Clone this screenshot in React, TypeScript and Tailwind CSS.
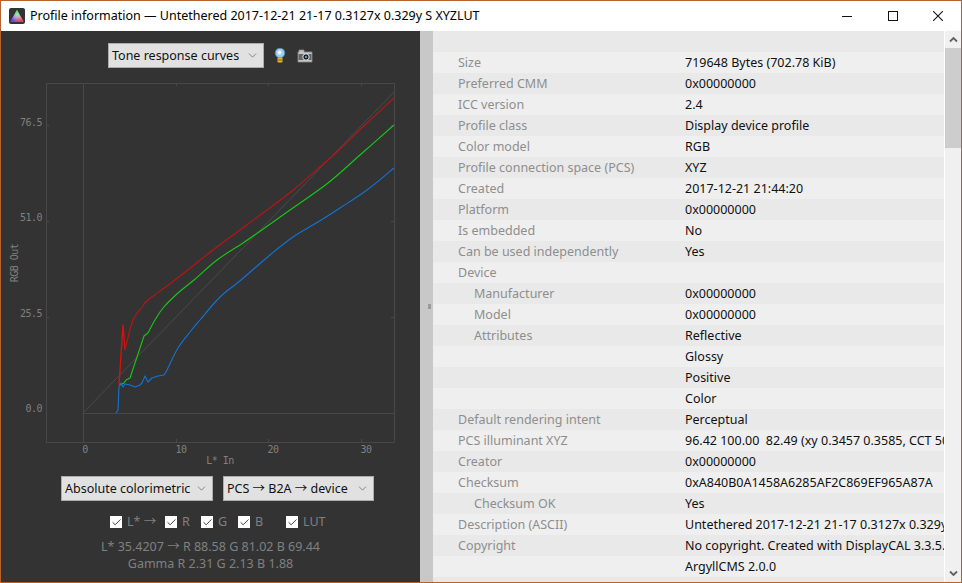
import React from 'react';
import { Check, ChevronDown } from 'lucide-react';

const rows: Array<{ label?: string; value?: string; indent?: boolean }> = [
  {},
  { label: 'Size', value: '719648 Bytes (702.78 KiB)' },
  { label: 'Preferred CMM', value: '0x00000000' },
  { label: 'ICC version', value: '2.4' },
  { label: 'Profile class', value: 'Display device profile' },
  { label: 'Color model', value: 'RGB' },
  { label: 'Profile connection space (PCS)', value: 'XYZ' },
  { label: 'Created', value: '2017-12-21 21:44:20' },
  { label: 'Platform', value: '0x00000000' },
  { label: 'Is embedded', value: 'No' },
  { label: 'Can be used independently', value: 'Yes' },
  { label: 'Device' },
  { label: 'Manufacturer', value: '0x00000000', indent: true },
  { label: 'Model', value: '0x00000000', indent: true },
  { label: 'Attributes', value: 'Reflective', indent: true },
  { value: 'Glossy' },
  { value: 'Positive' },
  { value: 'Color' },
  { label: 'Default rendering intent', value: 'Perceptual' },
  { label: 'PCS illuminant XYZ', value: '96.42 100.00  82.49 (xy 0.3457 0.3585, CCT 5000K)' },
  { label: 'Creator', value: '0x00000000' },
  { label: 'Checksum', value: '0xA840B0A1458A6285AF2C869EF965A87A' },
  { label: 'Checksum OK', value: 'Yes', indent: true },
  { label: 'Description (ASCII)', value: 'Untethered 2017-12-21 21-17 0.3127x 0.329y S XYZLUT' },
  { label: 'Copyright', value: 'No copyright. Created with DisplayCAL 3.3.5.' },
  { value: 'ArgyllCMS 2.0.0' },
  {},
];

const toggles = [
  { label: 'L* →', width: 'w-[55px]' },
  { label: 'R', width: 'w-[36px]' },
  { label: 'G', width: 'w-[37px]' },
  { label: 'B', width: 'w-[48px]' },
  { label: 'LUT', width: 'w-[50px]' },
];

type Pt = [number, number];

// catmull-rom through the measured points, the jagged shadow end stays straight
function smooth(p: Pt[]) {
  let d = `M${p[0][0]} ${p[0][1]}`;
  for (let i = 0; i < p.length - 1; i++) {
    const a = p[Math.max(i - 1, 0)];
    const b = p[i];
    const c = p[i + 1];
    const e = p[Math.min(i + 2, p.length - 1)];
    const c1x = b[0] + (c[0] - a[0]) / 6;
    const c1y = b[1] + (c[1] - a[1]) / 6;
    const c2x = c[0] - (e[0] - b[0]) / 6;
    const c2y = c[1] - (e[1] - b[1]) / 6;
    d += `C${c1x} ${c1y} ${c2x} ${c2y} ${c[0]} ${c[1]}`;
  }
  return d;
}

const redLow = '119,385 123,325 125,350';
const red: Pt[] = [[125, 350], [133, 320], [143, 306], [148, 300], [175, 280], [213, 250], [240, 230], [267, 210], [292, 191], [320, 167], [340, 149], [367, 123], [394, 98]];
const greenLow = '120,385 124,383 126,380 130,378 137,357 144,336 148,333';
const green: Pt[] = [[148, 333], [155, 320], [163, 308], [178, 293], [194, 280], [217, 260], [243, 243], [266, 227], [290, 210], [328, 183], [360, 155], [394, 125]];
const blueLow = '116,413 118,410 119,387 121,383 123,387 125,384 130,385 135,387 140,385 142,383 145,376 148,382 152,378 158,376 164,375 166,372';
const blue: Pt[] = [[166, 372], [178, 348], [190, 332], [200, 320], [220, 297], [241, 280], [270, 255], [293, 237], [318, 222], [340, 208], [367, 190], [394, 168]];

function Dropdown({ label, width }: { label: string; width: string }) {
  return (
    <div className={`${width} h-[25px] flex items-center justify-between bg-[#e1e1e1] border border-[#adadad] pl-[3px] pr-[4px] text-[12.5px] text-[#111] whitespace-nowrap`}>
      <span className="pt-[2px]">{label}</span>
      <ChevronDown size={13} strokeWidth={1.2} className="text-[#555]" />
    </div>
  );
}

function Chart() {
  return (
    <svg width="419" height="396" viewBox="1 74 419 396" className="block" fontFamily="'DejaVu Sans Mono', monospace" fontSize="10" letterSpacing="-0.5" fill="#808080">
      <g stroke="#484848" fill="none">
        <rect x="46.5" y="83.5" width="348" height="359" />
        <path d="M83.5 83V442M83 413.5H394" />
        <path d="M176.5 83v3M268.5 83v3M361.5 83v3M176.5 442v-3M268.5 442v-3M361.5 442v-3M46 125.5h3M46 221.5h3M46 317.5h3M394 125.5h-3M394 221.5h-3M394 317.5h-3" />
      </g>
      <polyline points="83,413 394,92" fill="none" stroke="#4a4a4a" />
      <g fill="none" strokeWidth="1.1" strokeLinejoin="round">
        <polyline points={redLow} stroke="#d81010" strokeWidth="1.4" />
        <path d={smooth(red)} stroke="#bc1414" />
        <polyline points={greenLow} stroke="#15c915" />
        <path d={smooth(green)} stroke="#15c915" />
        <polyline points={blueLow} stroke="#1074d8" />
        <path d={smooth(blue)} stroke="#1074d8" />
      </g>
      <g textAnchor="end">
        <text x="42" y="126">76.5</text>
        <text x="42" y="221">51.0</text>
        <text x="42" y="317">25.5</text>
        <text x="42" y="412">0.0</text>
      </g>
      <g textAnchor="middle">
        <text x="85" y="453">0</text>
        <text x="181" y="453">10</text>
        <text x="273" y="453">20</text>
        <text x="366" y="453">30</text>
        <text x="220" y="464">L* In</text>
        <text x="0" y="0" transform="translate(18 263) rotate(-90)">RGB Out</text>
      </g>
    </svg>
  );
}

function AppLogo() {
  return (
    <svg width="16" height="16" viewBox="0 0 16 16" className="shrink-0">
      <defs>
        <linearGradient id="logoGreen" x1="0.5" y1="0" x2="0.5" y2="1">
          <stop offset="0" stopColor="#20e040" />
          <stop offset="0.65" stopColor="#20e040" stopOpacity="0" />
        </linearGradient>
        <linearGradient id="logoBlue" x1="0" y1="1" x2="0.6" y2="0.5">
          <stop offset="0" stopColor="#3010f0" />
          <stop offset="1" stopColor="#3010f0" stopOpacity="0" />
        </linearGradient>
        <linearGradient id="logoRed" x1="1" y1="1" x2="0.4" y2="0.5">
          <stop offset="0" stopColor="#f01020" />
          <stop offset="1" stopColor="#f01020" stopOpacity="0" />
        </linearGradient>
      </defs>
      <rect width="16" height="16" rx="2" fill="#333" />
      <path d="M8 2L14.5 13.5H1.5Z" fill="#f4f4f4" />
      <path d="M8 2L14.5 13.5H1.5Z" fill="url(#logoGreen)" />
      <path d="M8 2L14.5 13.5H1.5Z" fill="url(#logoBlue)" />
      <path d="M8 2L14.5 13.5H1.5Z" fill="url(#logoRed)" />
    </svg>
  );
}

function BulbIcon() {
  return (
    <svg width="12" height="15" viewBox="0 0 12 15">
      <circle cx="6" cy="5" r="4.8" fill="#9fcdf2" stroke="#4e83b3" strokeWidth="0.8" />
      <circle cx="5.5" cy="4.5" r="2" fill="#eef8ff" />
      <rect x="3.5" y="9.5" width="5" height="5" rx="1" fill="#e3b92e" />
      <path d="M3.5 12h5" stroke="#7d6210" />
    </svg>
  );
}

function CameraIcon() {
  return (
    <svg width="16" height="15" viewBox="0 0 16 15">
      <path d="M1 4h1V2h5v2h8v10H1Z" fill="#c4c4c4" stroke="#8c8c8c" strokeWidth="0.8" />
      <rect x="1.5" y="6" width="13" height="6" fill="#666" />
      <circle cx="9" cy="9" r="3.2" fill="#1d1d1d" stroke="#e8e8e8" />
      <circle cx="9" cy="9" r="1.2" fill="#5f8fc0" />
    </svg>
  );
}

function WindowControls() {
  return (
    <div className="flex items-center text-[#111]">
      <div className="w-[46px] flex justify-center">
        <svg width="10" height="10" viewBox="0 0 10 10"><path d="M0 5.5H10" stroke="currentColor" /></svg>
      </div>
      <div className="w-[45px] flex justify-center">
        <svg width="10" height="10" viewBox="0 0 10 10"><rect x="0.5" y="0.5" width="9" height="9" fill="none" stroke="currentColor" /></svg>
      </div>
      <div className="w-[46px] flex justify-center">
        <svg width="10" height="10" viewBox="0 0 10 10"><path d="M0 0L10 10M10 0L0 10" stroke="currentColor" strokeWidth="1.05" /></svg>
      </div>
    </div>
  );
}

function ScrollArrow({ up }: { up?: boolean }) {
  return (
    <div className="h-[17px] flex items-center justify-center">
      <svg width="9" height="7" viewBox="0 0 9 7" className={up ? '' : 'rotate-180'}>
        <path d="M1 5.5L4.5 2L8 5.5" fill="none" stroke="#606060" strokeWidth="1.8" />
      </svg>
    </div>
  );
}

export default function App() {
  return (
    <div className="w-[962px] h-[583px] flex flex-col overflow-hidden border border-[#b5622c] bg-white font-['Noto_Sans','Noto_Sans_CJK_SC',sans-serif] text-[12.5px]">
      {/* Title bar */}
      <div className="h-[30px] shrink-0 flex items-center bg-white text-black">
        <div className="ml-[8px] mr-[5px] flex"><AppLogo /></div>
        <span className="flex-1 whitespace-nowrap overflow-hidden">Profile information — Untethered 2017-12-21 21-17 0.3127x 0.329y S XYZLUT</span>
        <WindowControls />
      </div>

      <div className="flex-1 min-h-0 flex">
        {/* Left panel */}
        <div className="w-[419px] shrink-0 bg-[#333333] flex flex-col items-center pt-[12px]">
          <div className="flex items-center h-[25px] self-start ml-[107px]">
            <Dropdown label="Tone response curves" width="w-[156px]" />
            <div className="ml-[10px] flex"><BulbIcon /></div>
            <div className="ml-[11px] flex"><CameraIcon /></div>
          </div>
          <div className="mt-[6px]"><Chart /></div>
          <div className="mt-[6px] self-start ml-[60px] flex gap-[10px]">
            <Dropdown label="Absolute colorimetric" width="w-[152px]" />
            <Dropdown label="PCS → B2A → device" width="w-[151px]" />
          </div>
          <div className="mt-[14px] self-start ml-[109px] h-[14px] flex items-center text-[#808080]">
            {toggles.map((t) => (
              <div key={t.label} className={`${t.width} flex items-center`}>
                <div className="w-[12px] h-[12px] bg-white flex items-center justify-center mr-[5px]">
                  <Check size={11} strokeWidth={2} className="text-[#333]" />
                </div>
                <span>{t.label}</span>
              </div>
            ))}
          </div>
          <div className="mt-[9px] text-center text-[#808080] leading-[17px]">
            <div>L* 35.4207 → R 88.58 G 81.02 B 69.44</div>
            <div>Gamma R 2.31 G 2.13 B 1.88</div>
          </div>
        </div>

        {/* Sash */}
        <div className="w-[13px] shrink-0 bg-[#c8c8c8] flex items-center pl-[8px]">
          <div className="w-[3px] h-[5px] mt-[-1px] bg-[#9a9a9a]" />
        </div>

        {/* Info table */}
        <div className="flex-1 min-w-0 overflow-hidden">
          {rows.map((row, i) => (
            <div key={i} className={`h-[21px] pt-[2px] flex items-center whitespace-pre ${i % 2 === 0 ? 'bg-[#e9e9e9]' : 'bg-[#efefef]'}`}>
              <div className={`w-[252px] shrink-0 text-[#8e8e8e] ${row.indent ? 'pl-[41px]' : 'pl-[25px]'}`}>{row.label}</div>
              <div className="text-[#111]">{row.value}</div>
            </div>
          ))}
        </div>

        {/* Scrollbar */}
        <div className="w-[16px] shrink-0 ml-[1px] bg-[#f0f0f0] flex flex-col">
          <ScrollArrow up />
          <div className="h-[100px] bg-[#cdcdcd]" />
          <div className="flex-1" />
          <ScrollArrow />
        </div>
      </div>
    </div>
  );
}
